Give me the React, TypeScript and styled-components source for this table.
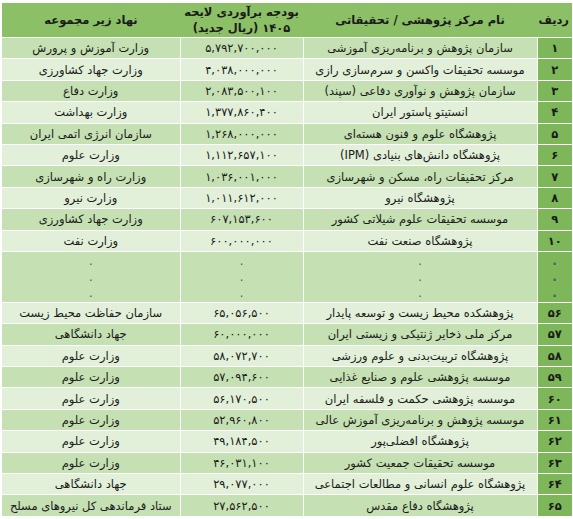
import React from 'react'
import styled, { createGlobalStyle } from 'styled-components'

const GlobalStyle = createGlobalStyle`
  html, body {
    margin: 0;
    padding: 0;
    background: #ffffff;
  }
  body {
    font-family: "DejaVu Sans", sans-serif;
    color: #1b1b1b;
  }
`

type Row = [string, string, string, string]

const topRows: Row[] = [
  ['۱', 'سازمان پژوهش و برنامه‌ریزی آموزشی', '۵,۷۹۲,۷۰۰,۰۰۰', 'وزارت آموزش و پرورش'],
  ['۲', 'موسسه تحقیقات واکسن و سرم‌سازی رازی', '۴,۰۳۸,۰۰۰,۰۰۰', 'وزارت جهاد کشاورزی'],
  ['۳', 'سازمان پژوهش و نوآوری دفاعی (سپند)', '۲,۰۸۳,۵۰۰,۱۰۰', 'وزارت دفاع'],
  ['۴', 'انستیتو پاستور ایران', '۱,۳۷۷,۸۶۰,۴۰۰', 'وزارت بهداشت'],
  ['۵', 'پژوهشگاه علوم و فنون هسته‌ای', '۱,۲۶۸,۰۰۰,۰۰۰', 'سازمان انرژی اتمی ایران'],
  ['۶', 'پژوهشگاه دانش‌های بنیادی (IPM)', '۱,۱۱۲,۶۵۷,۱۰۰', 'وزارت علوم'],
  ['۷', 'مرکز تحقیقات راه، مسکن و شهرسازی', '۱,۰۳۶,۰۰۱,۰۰۰', 'وزارت راه و شهرسازی'],
  ['۸', 'پژوهشگاه نیرو', '۱,۰۱۱,۶۱۲,۰۰۰', 'وزارت نیرو'],
  ['۹', 'موسسه تحقیقات علوم شیلاتی کشور', '۶۰۷,۱۵۳,۶۰۰', 'وزارت جهاد کشاورزی'],
  ['۱۰', 'پژوهشگاه صنعت نفت', '۶۰۰,۰۰۰,۰۰۰', 'وزارت نفت'],
]

const bottomRows: Row[] = [
  ['۵۶', 'پژوهشکده محیط زیست و توسعه پایدار', '۶۵,۰۵۶,۵۰۰', 'سازمان حفاظت محیط زیست'],
  ['۵۷', 'مرکز ملی ذخایر ژنتیکی و زیستی ایران', '۶۰,۰۰۰,۰۰۰', 'جهاد دانشگاهی'],
  ['۵۸', 'پژوهشگاه تربیت‌بدنی و علوم ورزشی', '۵۸,۰۷۲,۷۰۰', 'وزارت علوم'],
  ['۵۹', 'موسسه پژوهشی علوم و صنایع غذایی', '۵۷,۰۹۴,۶۰۰', 'وزارت علوم'],
  ['۶۰', 'موسسه پژوهشی حکمت و فلسفه ایران', '۵۶,۱۷۰,۵۰۰', 'وزارت علوم'],
  ['۶۱', 'موسسه پژوهش و برنامه‌ریزی آموزش عالی', '۵۲,۹۶۰,۸۰۰', 'وزارت علوم'],
  ['۶۲', 'پژوهشگاه افضلی‌پور', '۴۹,۱۸۴,۵۰۰', 'وزارت علوم'],
  ['۶۳', 'موسسه تحقیقات جمعیت کشور', '۴۶,۰۳۱,۱۰۰', 'وزارت علوم'],
  ['۶۴', 'پژوهشگاه علوم انسانی و مطالعات اجتماعی', '۲۹,۰۷۷,۰۰۰', 'جهاد دانشگاهی'],
  ['۶۵', 'پژوهشگاه دفاع مقدس', '۲۷,۵۶۲,۵۰۰', 'ستاد فرماندهی کل نیروهای مسلح'],
]

const DataRow = ({ row, dark }: { row: Row; dark: boolean }) => (
  <tr>
    <Num>{row[0]}</Num>
    <Cell $dark={dark}>{row[1]}</Cell>
    <Cell $dark={dark}>{row[2]}</Cell>
    <Cell $dark={dark}>{row[3]}</Cell>
  </tr>
)

function App() {
  return (
    <Page>
      <GlobalStyle />
      <Table dir="rtl">
        <colgroup>
          <col style={{ width: 35 }} />
          <col style={{ width: 234 }} />
          <col style={{ width: 123 }} />
          <col style={{ width: 178 }} />
        </colgroup>
        <thead>
          <tr>
            <Head $align="right">ردیف</Head>
            <Head>نام مرکز پژوهشی / تحقیقاتی</Head>
            <Head>
              بودجه برآوردی لایحه
              <br />
              ۱۴۰۵ (ریال جدید)
            </Head>
            <Head>نهاد زیر مجموعه</Head>
          </tr>
        </thead>
        <tbody>
          {topRows.map((r, i) => (
            <DataRow key={r[0]} row={r} dark={i % 2 === 0} />
          ))}
          <tr>
            <Num $tall>
              <Dots $bold>.<br />.<br />.</Dots>
            </Num>
            <Cell $dark $tall>
              <Dots>.<br />.<br />.</Dots>
            </Cell>
            <Cell $dark $tall>
              <Dots>.<br />.<br />.</Dots>
            </Cell>
            <Cell $dark $tall>
              <Dots>.<br />.<br />.</Dots>
            </Cell>
          </tr>
          {bottomRows.map((r, i) => (
            <DataRow key={r[0]} row={r} dark={i % 2 === 1} />
          ))}
        </tbody>
      </Table>
    </Page>
  )
}

export default App

const Page = styled.div`
  padding: 3px 1px 0 2px;
`

const Table = styled.table`
  width: 570px;
  border-collapse: collapse;
  table-layout: fixed;
  font-size: 11.5px;
  line-height: 14px;
`

const Head = styled.th<{ $align?: string }>`
  background: #8bc067;
  height: 34px;
  padding: 0 3px;
  font-weight: bold;
  font-size: 11.5px;
  line-height: 16px;
  white-space: nowrap;
  text-align: ${p => p.$align || 'center'};
  border-bottom: 1px solid #ffffff;
`

const Num = styled.td<{ $tall?: boolean }>`
  background: #7db75a;
  height: ${p => (p.$tall ? '50px' : '20.4px')};
  padding: 0;
  text-align: center;
  font-weight: bold;
  border: 1px solid #ffffff;
  border-right: none;
`

const Cell = styled.td<{ $dark?: boolean; $tall?: boolean }>`
  background: ${p => (p.$dark ? '#c5e0b3' : '#e2efd9')};
  height: ${p => (p.$tall ? '50px' : '20.4px')};
  padding: 0 4px;
  text-align: center;
  white-space: nowrap;
  overflow: hidden;
  border: 1px solid #ffffff;
  &:last-child {
    border-left: none;
  }
`

const Dots = styled.div<{ $bold?: boolean }>`
  line-height: 16px;
  font-weight: ${p => (p.$bold ? 'bold' : 'normal')};
  color: #555;
`
